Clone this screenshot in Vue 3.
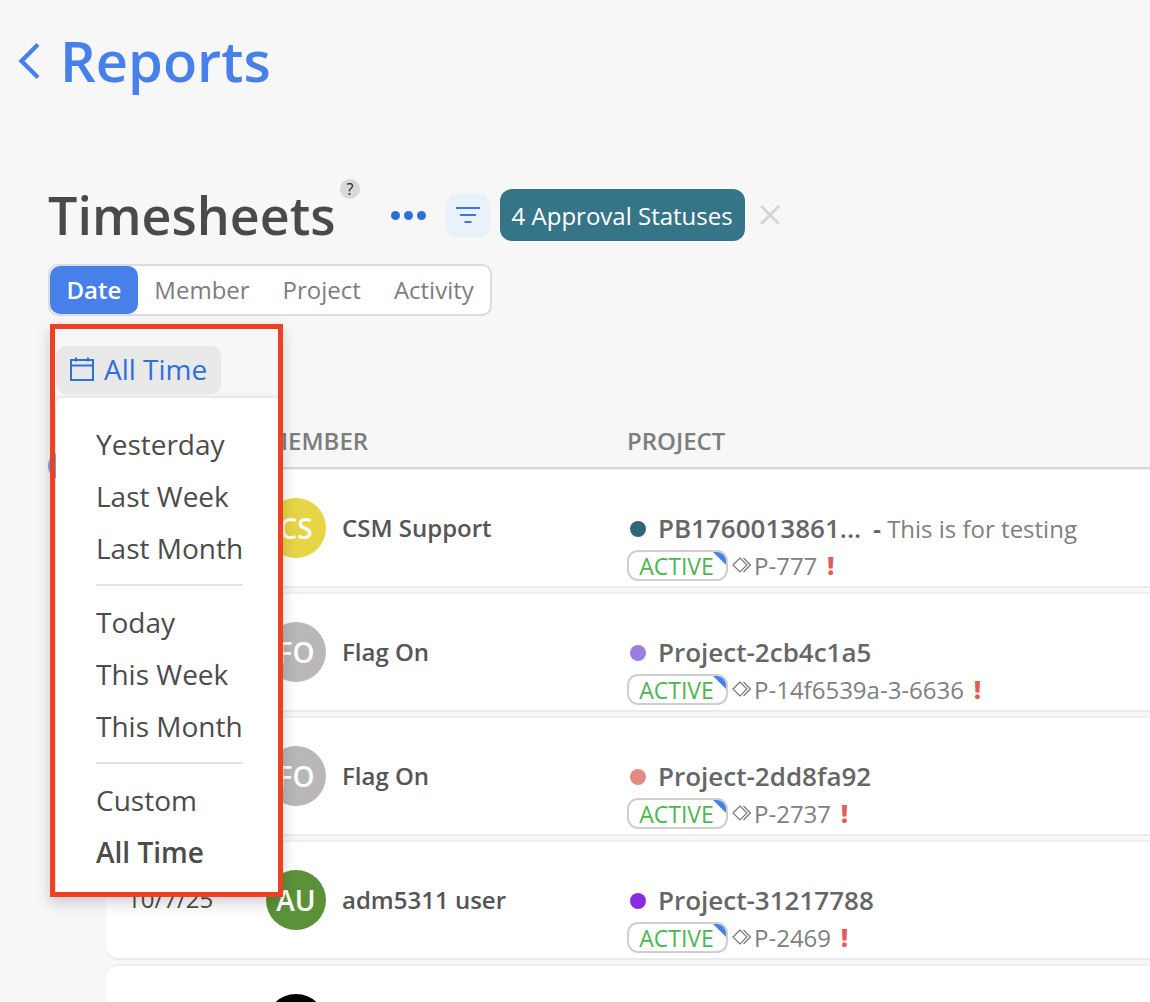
<script setup>
const tabs = ['Date', 'Member', 'Project', 'Activity']
const groups = [
  ['Yesterday', 'Last Week', 'Last Month'],
  ['Today', 'This Week', 'This Month'],
  ['Custom', 'All Time'],
]
const rows = [
  { date: '', initials: 'CS', avatar: '#e6d547', name: 'CSM Support', dot: '#33657a', project: 'PB1760013861...', desc: 'This is for testing', code: 'P-777' },
  { date: '', initials: 'FO', avatar: '#b9b7b7', name: 'Flag On', dot: '#9a7fe0', project: 'Project-2cb4c1a5', code: 'P-14f6539a-3-6636' },
  { date: '', initials: 'FO', avatar: '#b9b7b7', name: 'Flag On', dot: '#e28a84', project: 'Project-2dd8fa92', code: 'P-2737' },
  { date: '10/7/25', initials: 'AU', avatar: '#5b9239', name: 'adm5311 user', dot: '#8a2be2', project: 'Project-31217788', code: 'P-2469' },
  { date: '', initials: '', avatar: '#000', name: '', dot: 'transparent', project: '', code: '' },
]
</script>

<template>
  <div class="page">
    <a class="back">
      <svg class="chev" width="24" height="38" viewBox="0 0 24 38"><path d="M21 2.500 4.500 19 21 35.500" fill="none" stroke="#4680e8" stroke-width="4.400"/></svg>
      <span>Reports</span>
    </a>

    <div class="titlebar">
      <h1>Timesheets</h1>
      <span class="help">?</span>
      <span class="dots"><i></i><i></i><i></i></span>
      <span class="filter">
        <svg width="24" height="18" viewBox="0 0 24 18"><path d="M0 2h24M4 9h16M8.500 16h7" stroke="#3a78e0" stroke-width="2"/></svg>
      </span>
      <span class="chip">4 Approval Statuses</span>
      <svg class="close" width="20" height="20" viewBox="0 0 20 20"><path d="M1 1l18 18M19 1 1 19" stroke="#d6d6d6" stroke-width="3"/></svg>
    </div>

    <div class="tabs">
      <span v-for="(t, i) in tabs" :key="t" class="tab" :class="{ on: i === 0 }">{{ t }}</span>
    </div>

    <div class="range">
      <svg width="24" height="24" viewBox="0 0 24 24" fill="none" stroke="#2f70d8" stroke-width="2"><rect x="1" y="3" width="22" height="20"/><path d="M1 8.500h22M6 0.500v4M18 0.500v4"/></svg>
      <span>All Time</span>
    </div>

    <div class="thead">
      <span class="tick"></span>
      <span class="th member">MEMBER</span>
      <span class="th">PROJECT</span>
    </div>

    <div class="list">
      <div v-for="(r, i) in rows" :key="i" class="row">
        <span class="date">{{ r.date }}</span>
        <div class="who">
          <span class="avatar" :style="{ background: r.avatar }">{{ r.initials }}</span>
          <span v-if="r.name" class="name">{{ r.name }}</span>
        </div>
        <div v-if="r.project" class="proj">
          <div class="line1">
            <span class="dot" :style="{ background: r.dot }"></span>
            <span class="pname">{{ r.project }}</span>
            <span v-if="r.desc" class="desc"><b>-</b> {{ r.desc }}</span>
          </div>
          <div class="line2">
            <span class="badge">ACTIVE<i></i></span>
            <svg class="tag" width="20" height="16" viewBox="0 0 20 16" fill="none" stroke="#777" stroke-width="1.200"><path d="M8 1 1 8l7 7 7-7z"/><path d="M11.500 1 18.500 8l-7 7"/></svg>
            <span class="code">{{ r.code }}</span>
            <span class="bang">!</span>
          </div>
        </div>
      </div>
    </div>

    <div class="annot">
      <div class="menu">
        <template v-for="(g, i) in groups" :key="i">
          <hr v-if="i > 0" />
          <div v-for="o in g" :key="o" class="opt" :class="{ sel: o === 'All Time' }">{{ o }}</div>
        </template>
      </div>
    </div>
  </div>
</template>

<style>
html, body { margin: 0; background: #f7f7f7; }
</style>

<style scoped>
.page {
  position: relative;
  width: 1150px;
  height: 1002px;
  overflow: hidden;
  background: #f7f7f7;
  font-family: "Open Sans", "Noto Sans", sans-serif;
  color: #4c4c4c;
}
.back {
  display: flex;
  align-items: center;
  gap: 19px;
  padding: 27px 0 0 17px;
  height: 67px;
  color: #4680e8;
  font-size: 56px;
  font-weight: 600;
  line-height: 67px;
}
.chev { flex: none; }
.titlebar {
  display: flex;
  align-items: center;
  height: 80px;
  margin: 81px 0 9px;
  padding-left: 48px;
  position: relative;
}
h1 {
  margin: 0;
  font-size: 52px;
  font-weight: 600;
  line-height: 70px;
  color: #4a4a4a;
}
.help {
  position: absolute;
  left: 340px;
  top: 4px;
  width: 20px;
  height: 20px;
  border-radius: 50%;
  background: #d9d9d9;
  color: #222;
  font-size: 16px;
  line-height: 20px;
  text-align: center;
}
.dots {
  display: flex;
  gap: 4px;
  margin-left: 55px;
}
.dots i {
  width: 9px;
  height: 9px;
  border-radius: 50%;
  background: #2f70d8;
}
.filter {
  display: flex;
  align-items: center;
  justify-content: center;
  width: 44px;
  height: 44px;
  margin-left: 20px;
  border-radius: 10px;
  background: #e9f1fb;
}
.chip {
  display: flex;
  align-items: center;
  height: 52px;
  margin-left: 10px;
  padding: 0 12px;
  border-radius: 12px;
  background: #367587;
  color: #fff;
  font-size: 24px;
}
.close { margin-left: 15px; }
.tabs {
  display: flex;
  width: fit-content;
  height: 48px;
  margin-left: 48px;
  border: 2px solid #dcdcdc;
  border-radius: 10px;
  background: #fff;
}
.tab {
  display: flex;
  align-items: center;
  padding: 0 16.500px 2px;
  font-size: 24px;
  color: #7d7d7d;
  border-radius: 10px;
}
.tab.on {
  background: #4680e8;
  color: #fff;
  font-weight: 600;
}
.range {
  display: flex;
  align-items: center;
  gap: 10px;
  width: 165px;
  height: 48px;
  box-sizing: border-box;
  margin: 30px 0 0 56px;
  padding: 0 0 2px 14px;
  border-radius: 10px;
  background: #e9e9e9;
  color: #2f70d8;
  font-size: 28px;
}
.thead {
  display: grid;
  grid-template-columns: 160px 361px 1fr;
  height: 75px;
  margin-left: 106px;
  border-bottom: 2px solid #d8d8d8;
  align-items: end;
  padding-bottom: 11px;
  box-sizing: border-box;
  position: relative;
}
.th {
  font-size: 24px;
  font-weight: 600;
  color: #7d7d7d;
  line-height: 30px;
}
.member { grid-column: 2; }
.tick {
  position: absolute;
  left: -58px;
  top: 58px;
  width: 28px;
  height: 28px;
  border-radius: 50%;
  background: #7ea6ee;
}
.list {
  display: flex;
  flex-direction: column;
  gap: 8px;
  margin: 1px 0 0 106px;
}
.row {
  display: grid;
  grid-template-columns: 160px 361px 1fr;
  align-items: center;
  height: 116px;
  flex: none;
  background: #fff;
  border-radius: 12px 0 0 12px;
  box-shadow: 0 2px 0 #ebebeb, 0 -2px 0 #efefef;
}
.date {
  padding: 0 0 3px 21px;
  font-size: 24px;
  font-weight: 500;
  color: #4c4c4c;
}
.who {
  display: flex;
  align-items: center;
  gap: 16px;
}
.avatar {
  display: flex;
  align-items: center;
  justify-content: center;
  width: 60px;
  height: 60px;
  border-radius: 50%;
  color: #fff;
  font-size: 28px;
  font-weight: 600;
}
.name {
  padding-bottom: 2px;
  font-size: 24px;
  font-weight: 600;
  color: #555;
}
.proj {
  align-self: start;
  padding-top: 40px;
}
.line1 {
  display: flex;
  align-items: center;
  height: 36px;
}
.dot {
  width: 16px;
  height: 16px;
  border-radius: 50%;
  margin: 2px 12px 0 3px;
}
.pname {
  font-size: 26px;
  font-weight: 600;
  color: #666;
}
.desc {
  margin-left: 12px;
  font-size: 24px;
  color: #808080;
}
.desc b { font-weight: 700; color: #666; }
.line2 {
  display: flex;
  align-items: center;
  height: 32px;
  margin-top: 3px;
}
.badge {
  position: relative;
  box-sizing: border-box;
  width: 101px;
  height: 31px;
  padding-right: 2px;
  border: 2px solid #cfcfcf;
  border-radius: 11px;
  color: #4db552;
  font-size: 23px;
  font-weight: 500;
  line-height: 28px;
  text-align: center;
  overflow: hidden;
}
.badge i {
  position: absolute;
  right: -1px;
  top: -1px;
  width: 0;
  height: 0;
  border-top: 15px solid #4680e8;
  border-left: 15px solid transparent;
}
.tag { margin-left: 4px; }
.code {
  margin-left: 2px;
  font-size: 24px;
  color: #808080;
}
.bang {
  margin-left: 10px;
  color: #e05d5a;
  font-size: 24px;
  font-weight: 800;
}
.annot {
  position: absolute;
  left: 50px;
  top: 324px;
  width: 233px;
  height: 573px;
  box-sizing: border-box;
  border: 5px solid #ee4023;
  box-shadow: 0 6px 14px rgba(0, 0, 0, 0.18);
  overflow: hidden;
}
.menu {
  position: absolute;
  left: 1px;
  top: 69px;
  width: 222px;
  height: 500px;
  box-sizing: border-box;
  padding: 20px 0 0 40px;
  background: #fff;
  border-radius: 6px 0 0 0;
  box-shadow: 0 0 6px rgba(0, 0, 0, 0.15);
}
.opt {
  height: 52px;
  font-size: 28px;
  line-height: 52px;
  color: #4c4c4c;
  white-space: nowrap;
}
.opt.sel { font-weight: 600; }
hr {
  width: 147px;
  height: 2px;
  margin: 10px 0 10px;
  border: 0;
  background: #e3e3e3;
}
</style>
